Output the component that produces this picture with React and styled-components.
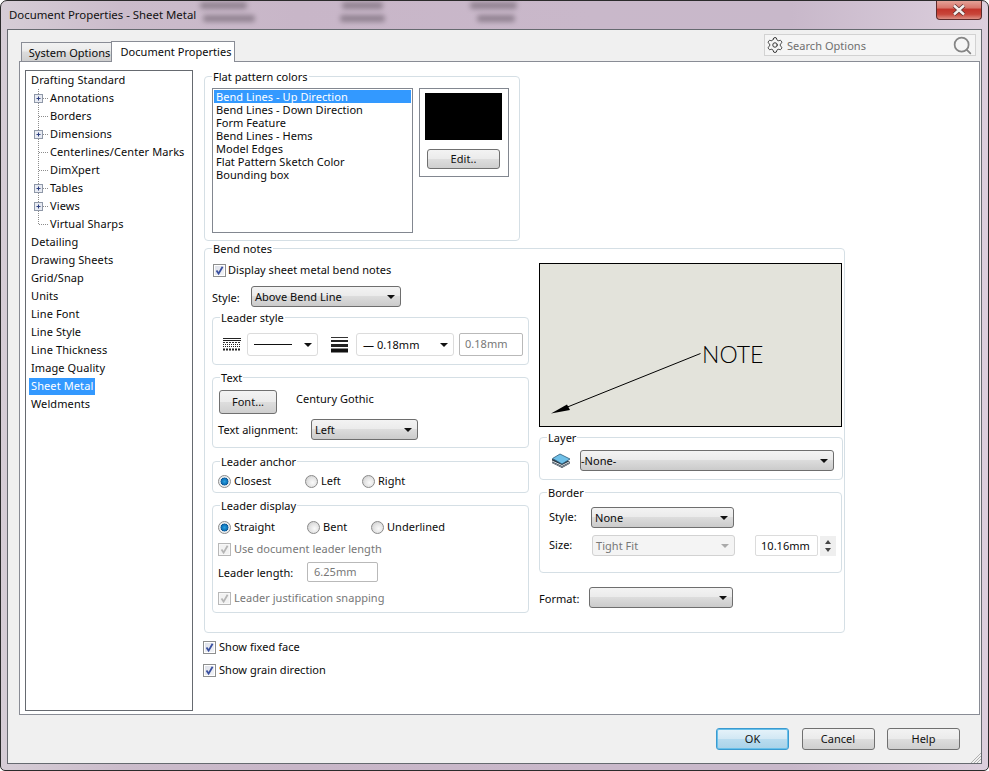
import React from "react";
import styled, { createGlobalStyle } from "styled-components";
import { Settings, Search } from "lucide-react";

const Global = createGlobalStyle`
  html, body { margin: 0; padding: 0; background: #fff; }
  * { box-sizing: border-box; }
  body { font-family: "Noto Sans", "DejaVu Sans", sans-serif; font-size: 11px; letter-spacing: .03px; color: #0a0a0a; }
`;

const Frame = styled.div`
  position: relative; width: 989px; height: 771px; display: flex; flex-direction: column;
  padding: 0 6px 6px; border: 1px solid #2b2b2b; border-radius: 7px 7px 5px 5px; overflow: hidden;
  background: linear-gradient(90deg, #d6cdd6 0, #cbbccb 12%, #c8b6c8 30%, #c9b8ca 60%, #c8b8ca 80%, #dccfdd 100%);
`;
const TitleBar = styled.div`
  position: relative; height: 28px; flex: none; display: flex; align-items: center; padding: 0 0 2px 2px;
  font-size: 11.4px; letter-spacing: 0; color: #111;
`;
const Smudge = styled.span`
  position: absolute; left: ${p => p.$x}px; top: ${p => p.$y}px; width: ${p => p.$w}px; height: 7px;
  background: #6f626f; opacity: .62; filter: blur(2.5px); border-radius: 3px;
`;
const CloseButton = styled.div`
  position: absolute; right: 0; top: -1px; width: 46px; height: 20px; display: flex; align-items: center; justify-content: center;
  border: 1px solid #5d2b2b; border-top: 0; border-radius: 0 0 4px 4px;
  background: linear-gradient(#e6a79d 0, #d8776c 40%, #c3352b 50%, #c8463a 75%, #dd8f84 100%);
`;
const Client = styled.div`
  position: relative; flex: 1; display: flex; flex-direction: column; min-height: 0;
  border: 1px solid #666a70; background: #f0f0f0; padding: 0 1px 0 11px;
`;
const TopBar = styled.div`
  height: 31px; flex: none; display: flex; align-items: flex-end; padding-left: 2px;
`;
const Tab = styled.div`
  display: flex; align-items: center; justify-content: center; border: 1px solid #898c95; padding-left: 6px;
  width: ${p => p.$w}px;
  ${p => p.$active
    ? `height: 21px; background: #fff; border-bottom: 0; margin-bottom: -1px; position: relative; z-index: 1; margin-left: -1px; padding-bottom: 2px;`
    : `height: 19px; background: linear-gradient(#f2f2f2, #ebebeb 45%, #dcdcdc 50%, #cfcfcf); border-bottom: 0; margin-top: 2px;`}
`;
const SearchBox = styled.div`
  width: 212px; height: 22px; align-self: flex-start; margin: 4px 4px 0 auto; display: flex; align-items: center;
  background: #f5f5f5; border: 1px solid #d2d2d2; color: #6f6f6f; padding: 0 2px 0 1px; gap: 3px;
  svg { flex: none; }
`;
const SearchText = styled.span` flex: 1; padding-top: 1px; `;
const Panel = styled.div`
  flex: none; height: 654px; display: flex; background: #fff; border: 1px solid #898c95; padding: 8px 0 3px 5px;
`;
const Tree = styled.div`
  width: 168px; height: 641px; flex: none; border: 1px solid #666a70; background: #fff; padding-top: 0;
`;
const TreeRow = styled.div`
  height: 18px; display: flex; align-items: center; padding-left: 5px; font-size: 11px; letter-spacing: .1px;
`;
const TreeLabel = styled.span`
  display: inline-flex; align-items: center; height: 17px; padding: 0 2px 2px; margin-left: -2px;
  ${p => p.$selected ? "background: #3399ff; color: #fff;" : ""}
`;
const MainColumn = styled.div`
  margin: 6px 0 0 11px; display: flex; flex-direction: column; align-items: flex-start;
`;
const Group = styled.div`
  position: relative; flex: none; width: ${p => p.$w}px; height: ${p => p.$h}px; margin-top: ${p => p.$mt || 0}px;
  border: 1px solid #d5dfe5; border-radius: 4px; padding: ${p => p.$pad || "0"};
`;
const Legend = styled.span`
  position: absolute; left: 7px; top: -7px; height: 14px; line-height: 14px; background: #fff; padding: 0 1px;
`;
const FlatBody = styled.div` display: flex; gap: 6px; align-items: flex-start; `;
const ListBox = styled.div`
  width: 201px; height: 145px; border: 1px solid #828790; padding: 1px; flex: none;
`;
const ListItem = styled.div`
  height: 13px; line-height: 13px; padding-left: 2px; letter-spacing: .05px;
  ${p => p.$selected ? "background: #3399ff; color: #fff;" : ""}
`;
const SwatchCard = styled.div`
  width: 90px; height: 89px; border: 1px solid #828790; padding: 4px 6px 4px 5px; display: flex; flex-direction: column; align-items: center;
`;
const Swatch = styled.div` width: 77px; height: 47px; background: #000; flex: none; `;
const PushButton = styled.button`
  font: inherit; letter-spacing: inherit; color: #111; padding: 0 0 1px; flex: none;
  width: ${p => p.$w}px; height: ${p => p.$h || 22}px; margin-top: ${p => p.$mt || 0}px;
  border: 1px solid #707070; border-radius: 3px;
  background: linear-gradient(#f3f3f3, #ebebeb 48%, #dddddd 52%, #cfcfcf);
  ${p => p.$default ? `border: 1px solid #3a9ad0; box-shadow: inset 0 0 0 1px #68c0ea; background: linear-gradient(#e6f3fa, #d2e8f4 48%, #b9dcef 52%, #a9d2e8);` : ""}
`;
const BendColumns = styled.div` display: grid; grid-template-columns: 317px 304px; column-gap: 10px; `;
const Column = styled.div` display: flex; flex-direction: column; align-items: flex-start; `;
const Caption = styled.span` padding-bottom: 2px; white-space: nowrap; `;
const CheckRow = styled.label`
  display: flex; align-items: center; gap: ${p => p.$gap ?? 3}px; height: 14px; flex: none;
  margin-top: ${p => p.$mt || 0}px; margin-left: ${p => p.$ml || 0}px;
  color: ${p => p.$off ? "#777" : "inherit"};
`;
const CheckBox = styled.span`
  width: 13px; height: 13px; flex: none; display: block; border: 1px solid ${p => p.$off ? "#b8b8b8" : "#8e8f8f"};
  background: ${p => p.$off ? "#f2f2f2" : "linear-gradient(135deg, #dcdfe8, #f4f5f8)"}; box-shadow: inset 0 0 0 1px ${p => p.$off ? "#f8f8f8" : "#fff"};
  svg { display: block; margin: 0; }
`;
const FieldRow = styled.div`
  display: flex; align-items: center; flex: none; gap: ${p => p.$gap || 0}px; margin-top: ${p => p.$mt || 0}px; margin-left: ${p => p.$ml || 0}px;
`;
const FieldLabel = styled.span`
  flex: none; width: ${p => p.$w}px;
  ${p => p.$nudge === "up" ? "padding-bottom: 2px;" : p.$nudge === "down" ? "padding-top: 2px;" : ""}
`;
const Select = styled.div`
  flex: none; display: flex; align-items: center; justify-content: space-between; gap: 6px;
  width: ${p => p.$w}px; height: ${p => p.$h || 21}px; padding: 0 5px 0 ${p => p.$pl ?? 3}px; border-radius: 3px;
  ${p => p.$kind === "flat" ? "background: #fff; border: 1px solid #dcdcdc; padding: 0 5px 0 6px;" :
    p.$kind === "off" ? "background: #f4f4f4; border: 1px solid #d2d2d2; color: #777;" :
    "background: linear-gradient(#f3f3f3, #ebebeb 46%, #dcdcdc 50%, #cbcbcb); border: 1px solid #6e6e6e;"}
`;
const Caret = styled.i`
  flex: none; width: 0; height: 0; border-left: 4px solid transparent; border-right: 4px solid transparent;
  border-top: 4px solid ${p => p.$off ? "#aaa" : "#111"}; margin-left: auto;
`;
const NumInput = styled.div`
  flex: none; display: flex; align-items: center; width: ${p => p.$w}px; height: ${p => p.$h || 21}px; padding: 0 0 ${p => p.$pb || 0}px ${p => p.$pl || 5}px;
  border: 1px solid ${p => p.$off ? "#b9b9b9" : "#dcdcdc"}; border-radius: 2px; color: ${p => p.$off ? "#777" : "inherit"}; background: #fff;
`;
const Spinner = styled.div`
  flex: none; width: 16px; height: 20px; background: #efefef; display: flex; flex-direction: column; align-items: center; justify-content: center; gap: 4px; margin-left: 2px;
`;
const SpinUp = styled.i` width: 0; height: 0; border: 3px solid transparent; border-top: 0; border-bottom: 4px solid #444; `;
const SpinDown = styled.i` width: 0; height: 0; border: 3px solid transparent; border-bottom: 0; border-top: 4px solid #444; `;
const Hint = styled.span` flex: none; align-self: flex-start; margin: 1px 0 0 19px; `;
const RadioRow = styled.div` display: flex; align-items: center; height: 13px; `;
const Radio = styled.label` flex: none; display: flex; align-items: center; gap: 3px; height: 13px; width: ${p => p.$w ? p.$w + "px" : "auto"}; `;
const RadioDot = styled.span`
  width: 13px; height: 13px; flex: none; border-radius: 50%; border: 1px solid #8a8a8a;
  background: ${p => p.$on
    ? "radial-gradient(circle closest-side, #2aa3e3 0, #0e6fb4 55%, #0a4f8c 68%, #dfe6ea 76%, #eef1f3 100%)"
    : "radial-gradient(circle at 60% 60%, #fafafa 0, #e4e4e4 50%, #c4c4c4 100%)"};
`;
const PreviewBox = styled.div` width: 303px; height: 164px; flex: none; border: 1px solid #000; background: #e3e3db; svg { display: block; } `;
const Footer = styled.div`
  flex: 1; display: flex; justify-content: flex-end; gap: 12.5px; padding: 13px 20px 0 0;
`;
const Grip = styled.svg` position: absolute; right: 0; bottom: 0; `;

const Check = ({ off }) => (
  <svg width="11" height="11" viewBox="0 0 11 11">
    <path d="M2.5 5.5 L4.6 8.6 L8.6 1.8" fill="none" stroke={off ? "#b5b5b5" : "#3a50a0"} strokeWidth="1.8" />
  </svg>
);

const TreeGutter = ({ plus, last }) => (
  <svg width="19" height="18" viewBox="0 0 19 18" style={{ flex: "none" }}>
    <path d={`M7.5 0 V${last ? 9 : 18}`} stroke="#8c8c8c" strokeDasharray="1 1" />
    <path d="M8 9.5 H18" stroke="#8c8c8c" strokeDasharray="1 1" />
    {plus && <>
      <rect x="3.5" y="5.5" width="8" height="8" fill="#e8ebf2" stroke="#8f98a8" />
      <path d="M5.5 9.5 H9.5 M7.5 7.5 V11.5" stroke="#2d3f80" />
    </>}
  </svg>
);

const treeItems = [
  ["Drafting Standard"],
  ["Annotations", "child", "plus"],
  ["Borders", "child"],
  ["Dimensions", "child", "plus"],
  ["Centerlines/Center Marks", "child"],
  ["DimXpert", "child"],
  ["Tables", "child", "plus"],
  ["Views", "child", "plus"],
  ["Virtual Sharps", "child", "", "last"],
  ["Detailing"], ["Drawing Sheets"], ["Grid/Snap"], ["Units"], ["Line Font"], ["Line Style"],
  ["Line Thickness"], ["Image Quality"], ["Sheet Metal", "", "", "", "sel"], ["Weldments"],
];

const colorItems = ["Bend Lines - Up Direction", "Bend Lines - Down Direction", "Form Feature", "Bend Lines - Hems", "Model Edges", "Flat Pattern Sketch Color", "Bounding box"];

const LineStyleIcon = () => (
  <svg width="20" height="16" viewBox="0 0 20 16" style={{ flex: "none", marginTop: 1 }}>
    <path d="M1 1.5 H19 M1 3.5 H19" stroke="#222" />
    <path d="M1 5.5 H19" stroke="#333" strokeDasharray="2 1" />
    <path d="M1 7.5 H19 M1 9.5 H19" stroke="#222" strokeDasharray="1 1" />
    <path d="M1 12.5 H19" stroke="#222" strokeWidth="2" strokeDasharray="2 1" />
  </svg>
);
const LineWeightIcon = () => (
  <svg width="19" height="17" viewBox="0 0 19 17" style={{ flex: "none" }}>
    <rect x="1" y="1" width="17" height="1" fill="#333" />
    <rect x="1" y="4" width="17" height="2" fill="#222" />
    <rect x="1" y="8" width="17" height="3" fill="#222" />
    <rect x="1" y="12.5" width="17" height="4" fill="#111" />
  </svg>
);
const LayerIcon = () => (
  <svg width="20" height="16" viewBox="0 0 20 16" style={{ flex: "none" }}>
    <path d="M1 10 L8 13.5 L11 15 L19 10.5 L19 8 L1 6 Z" fill="#2f3a44" />
    <path d="M1 8 L11 12.5 L19 8.5" fill="none" stroke="#dfe6ea" />
    <path d="M1 9.5 L11 14 L19 10" fill="none" stroke="#8995a0" />
    <path d="M1.5 5.5 L9 1 L19 6 L11 11 Z" fill="#6fc0e8" stroke="#2c5a78" strokeWidth=".8" />
  </svg>
);

export default function App() {
  return (
    <>
      <Global />
      <Frame>
        <TitleBar>
          Document Properties - Sheet Metal
          <Smudge $x={193} $y={1} $w={47} />
          <Smudge $x={196} $y={14} $w={52} />
          <Smudge $x={335} $y={1} $w={41} />
          <Smudge $x={333} $y={14} $w={45} />
          <Smudge $x={463} $y={1} $w={47} />
          <Smudge $x={470} $y={14} $w={38} />
          <CloseButton>
            <svg width="16" height="12" viewBox="0 0 16 12">
              <path d="M3 1.5 L13 10.5 M13 1.5 L3 10.5" stroke="#5a3030" strokeWidth="4" />
              <path d="M3 1.5 L13 10.5 M13 1.5 L3 10.5" stroke="#f4f0ee" strokeWidth="2.4" />
            </svg>
          </CloseButton>
        </TitleBar>
        <Client>
          <TopBar>
            <Tab $w={91}>System Options</Tab>
            <Tab $w={124} $active>Document Properties</Tab>
            <SearchBox>
              <Settings size={18} strokeWidth={1.3} color="#333" />
              <SearchText>Search Options</SearchText>
              <Search size={21} strokeWidth={2} color="#858585" />
            </SearchBox>
          </TopBar>
          <Panel>
            <Tree>
              {treeItems.map(([label, child, plus, last, sel]) => (
                <TreeRow key={label}>
                  {child && <TreeGutter plus={plus} last={last} />}
                  <TreeLabel $selected={sel}>{label}</TreeLabel>
                </TreeRow>
              ))}
            </Tree>
            <MainColumn>
              <Group $w={316} $h={165} $pad="11px 0 0 7px">
                <Legend>Flat pattern colors</Legend>
                <FlatBody>
                  <ListBox>
                    {colorItems.map((c, i) => <ListItem key={c} $selected={i === 0}>{c}</ListItem>)}
                  </ListBox>
                  <SwatchCard>
                    <Swatch />
                    <PushButton $w={73} $h={20} $mt={9}>Edit..</PushButton>
                  </SwatchCard>
                </FlatBody>
              </Group>
              <Group $w={641} $h={385} $mt={7} $pad="14px 0 0 7px">
                <Legend>Bend notes</Legend>
                <BendColumns>
                  <Column>
                    <CheckRow $gap={2} $ml={1}><CheckBox><Check /></CheckBox><Caption>Display sheet metal bend notes</Caption></CheckRow>
                    <FieldRow $mt={9}>
                      <FieldLabel $w={39} $nudge="down">Style:</FieldLabel>
                      <Select $w={150}>Above Bend Line<Caret /></Select>
                    </FieldRow>
                    <Group $w={317} $h={48} $mt={10} $pad="15px 0 0 9px">
                      <Legend>Leader style</Legend>
                      <FieldRow>
                        <LineStyleIcon />
                        <Select $kind="flat" $w={71} $h={23} style={{ marginLeft: 5 }}>
                          <svg width="38" height="2" style={{ flex: "none" }}><rect width="38" height="1" fill="#111" /></svg>
                          <Caret />
                        </Select>
                        <span style={{ width: 12 }} />
                        <LineWeightIcon />
                        <Select $kind="flat" $w={98} $h={23} style={{ marginLeft: 7 }}>
                          — 0.18mm<Caret />
                        </Select>
                        <NumInput $off $w={64} $h={23} $pb={3} style={{ marginLeft: 5 }}>0.18mm</NumInput>
                      </FieldRow>
                    </Group>
                    <Group $w={317} $h={71} $mt={12} $pad="12px 0 0 6px">
                      <Legend>Text</Legend>
                      <FieldRow>
                        <PushButton $w={58} $h={24}>Font...</PushButton>
                        <Hint>Century Gothic</Hint>
                      </FieldRow>
                      <FieldRow $mt={5} $ml={-1}>
                        <FieldLabel $w={93}>Text alignment:</FieldLabel>
                        <Select $w={107}>Left<Caret /></Select>
                      </FieldRow>
                    </Group>
                    <Group $w={317} $h={32} $mt={13} $pad="13px 0 0 5px">
                      <Legend>Leader anchor</Legend>
                      <RadioRow>
                        <Radio $w={87}><RadioDot $on /><Caption>Closest</Caption></Radio>
                        <Radio $w={57}><RadioDot /><Caption>Left</Caption></Radio>
                        <Radio><RadioDot /><Caption>Right</Caption></Radio>
                      </RadioRow>
                    </Group>
                    <Group $w={317} $h={108} $mt={12} $pad="15px 0 0 5px">
                      <Legend>Leader display</Legend>
                      <RadioRow>
                        <Radio $w={89}><RadioDot $on /><Caption>Straight</Caption></Radio>
                        <Radio $w={64}><RadioDot /><Caption>Bent</Caption></Radio>
                        <Radio><RadioDot /><Caption>Underlined</Caption></Radio>
                      </RadioRow>
                      <CheckRow $mt={8} $off><CheckBox $off><Check off /></CheckBox><Caption>Use document leader length</Caption></CheckRow>
                      <FieldRow $mt={6}>
                        <FieldLabel $w={89}>Leader length:</FieldLabel>
                        <NumInput $off $w={71} $h={20} $pb={2} $pl={6}>6.25mm</NumInput>
                      </FieldRow>
                      <CheckRow $mt={9} $off><CheckBox $off><Check off /></CheckBox><Caption>Leader justification snapping</Caption></CheckRow>
                    </Group>
                  </Column>
                  <Column>
                    <PreviewBox>
                      <svg width="301" height="162" viewBox="0 0 301 162">
                        <path d="M160.5 89.5 L20 146" stroke="#000" strokeWidth="1" fill="none" />
                        <path d="M11 149.5 L27 140.5 L30 146 Z" fill="#000" />
                        <text x="162" y="99" fontFamily="Lato, 'Open Sans', sans-serif" fontWeight="300" fontSize="23" fill="#000">NOTE</text>
                      </svg>
                    </PreviewBox>
                    <Group $w={304} $h={43} $mt={10} $pad="12px 0 0 11px">
                      <Legend>Layer</Legend>
                      <FieldRow $gap={9}>
                        <LayerIcon />
                        <Select $w={254} $pl={0}>-None-<Caret /></Select>
                      </FieldRow>
                    </Group>
                    <Group $w={303} $h={81} $mt={12} $pad="14px 0 0 9px">
                      <Legend>Border</Legend>
                      <FieldRow>
                        <FieldLabel $w={42} $nudge="up">Style:</FieldLabel>
                        <Select $w={143}>None<Caret /></Select>
                      </FieldRow>
                      <FieldRow $mt={7}>
                        <FieldLabel $w={43} $nudge="up">Size:</FieldLabel>
                        <Select $kind="off" $w={143}>Tight Fit<Caret $off /></Select>
                        <NumInput $w={63} style={{ marginLeft: 20 }}>10.16mm</NumInput>
                        <Spinner><SpinUp /><SpinDown /></Spinner>
                      </FieldRow>
                    </Group>
                    <FieldRow $mt={14}>
                      <FieldLabel $w={50} $nudge="down">Format:</FieldLabel>
                      <Select $w={144}><Caret /></Select>
                    </FieldRow>
                  </Column>
                </BendColumns>
              </Group>
              <CheckRow $mt={7} $ml={-1}><CheckBox><Check /></CheckBox><Caption>Show fixed face</Caption></CheckRow>
              <CheckRow $mt={9} $ml={-1}><CheckBox><Check /></CheckBox><Caption>Show grain direction</Caption></CheckRow>
            </MainColumn>
          </Panel>
          <Footer>
            <PushButton $w={73} $default>OK</PushButton>
            <PushButton $w={73}>Cancel</PushButton>
            <PushButton $w={73}>Help</PushButton>
          </Footer>
          <Grip width="11" height="11" viewBox="0 0 11 11">
            <path d="M1 11 L11 1 M4 11 L11 4 M7 11 L11 7" stroke="#b0b0b0" />
          </Grip>
        </Client>
      </Frame>
    </>
  );
}
